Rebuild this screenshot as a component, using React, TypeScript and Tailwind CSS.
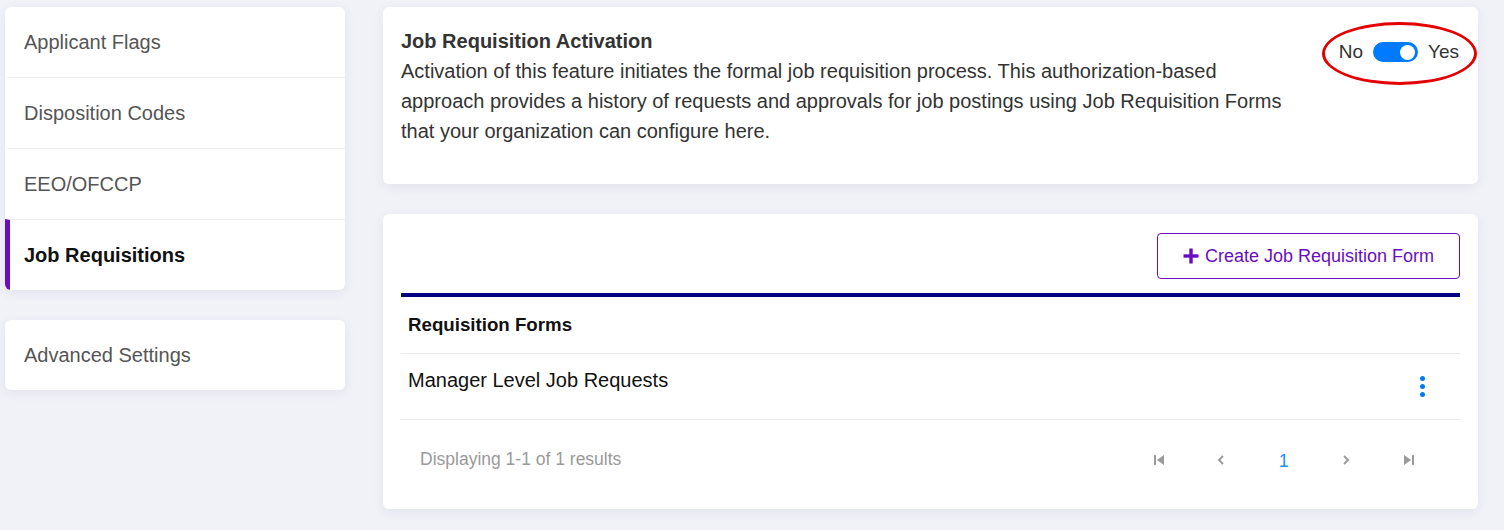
import { useState } from 'react';

const sideItems = ['Applicant Flags', 'Disposition Codes', 'EEO/OFCCP', 'Job Requisitions'];

export default function App() {
  const [active, setActive] = useState(true);
  const selected = 'Job Requisitions';

  return (
    <div className="flex min-h-[530px] gap-[38px] bg-[#f1f1f8] pl-[5px] pr-[26px] pt-[7px] font-['Liberation_Sans',Arial,sans-serif] text-[20px]">
      <aside className="flex w-[340px] shrink-0 flex-col gap-[30px]">
        <nav className="overflow-hidden rounded-md bg-white shadow-[0_3px_12px_rgba(40,40,90,0.07)]">
          {sideItems.map((item, i) => (
            <div
              key={item}
              className={`flex h-[70px] items-center pl-[14px] ${i > 0 ? 'box-content border-t border-[#ececf0]' : ''} ${item === selected ? 'border-l-[5px] border-l-[#6a0dc0] font-bold text-[#111]' : 'border-l-[5px] border-l-transparent text-[#555]'}`}
            >
              {item}
            </div>
          ))}
        </nav>
        <nav className="rounded-md bg-white shadow-[0_3px_12px_rgba(40,40,90,0.07)]">
          <div className="flex h-[70px] items-center pl-[19px] text-[#555]">Advanced Settings</div>
        </nav>
      </aside>

      <main className="flex flex-1 flex-col gap-[30px]">
        <section className="flex justify-between rounded-md bg-white px-[18px] pb-[38px] pt-[19px] leading-[30px] text-[#333] shadow-[0_3px_12px_rgba(40,40,90,0.07)]">
          <div className="w-[900px]">
            <h2 className="font-bold">Job Requisition Activation</h2>
            <p>
              Activation of this feature initiates the formal job requisition process. This authorization-based approach provides a history of requests and approvals for job postings using Job Requisition Forms that your organization can configure here.
            </p>
          </div>
          <div className="relative mr-[1px] mt-[11px] flex h-[30px] items-center gap-[10px] self-start text-[19px]">
            <span>No</span>
            <button
              onClick={() => setActive(!active)}
              className={`flex h-[20px] w-[45px] items-center rounded-full px-[3px] ${active ? 'justify-end bg-[#007bff]' : 'justify-start bg-[#ccc]'}`}
            >
              <span className="h-[15px] w-[15px] rounded-full bg-white" />
            </button>
            <span>Yes</span>
            <span className="pointer-events-none absolute -bottom-[18px] -left-[17px] -right-[18px] -top-[15px] rounded-[50%] border-[3px] border-[#e50000]" />
          </div>
        </section>

        <section className="rounded-md bg-white px-[18px] pt-[19px] shadow-[0_3px_12px_rgba(40,40,90,0.07)]">
          <div className="flex justify-end">
            <button className="flex h-[46px] w-[303px] items-center justify-center gap-[6px] rounded-[4px] border border-[#6a0dc0] text-[18px] text-[#6a0dc0]">
              <svg width="16" height="16" viewBox="0 0 16 16" fill="#6a0dc0">
                <rect x="6.3" y="0.5" width="3.4" height="15" />
                <rect x="0.5" y="6.3" width="15" height="3.4" />
              </svg>
              Create Job Requisition Form
            </button>
          </div>

          <div className="mt-[14px] h-[4px] bg-[#000080]" />
          <div className="flex h-[57px] items-center border-b border-[#eaeaea] pl-[7px] text-[18.7px] font-bold text-[#111]">Requisition Forms</div>
          <div className="flex h-[66px] justify-between border-b border-[#eaeaea] pl-[7px] pr-[35px] text-[#111]">
            <span className="pt-[11px] leading-[30px]">Manager Level Job Requests</span>
            <span className="flex flex-col gap-[3px] pt-[22px]">
              <span className="h-[5px] w-[5px] rounded-full bg-[#007bff]" />
              <span className="h-[5px] w-[5px] rounded-full bg-[#007bff]" />
              <span className="h-[5px] w-[5px] rounded-full bg-[#007bff]" />
            </span>
          </div>

          <div className="flex h-[89px] items-center justify-between pb-[10px] pl-[19px] pr-[20px]">
            <span className="text-[17.5px] text-[#9a9a9a]">Displaying 1-1 of 1 results</span>
            <div className="flex items-center">
              <PageCell>
                <svg width="12" height="12" viewBox="0 0 12 12" fill="#9a9a9a">
                  <rect x="1" y="1" width="2" height="10" />
                  <path d="M11 1 L4 6 L11 11 Z" />
                </svg>
              </PageCell>
              <PageCell>
                <svg width="8" height="12" viewBox="0 0 8 12" fill="none" stroke="#9a9a9a" strokeWidth="2">
                  <path d="M6 2 L2 6 L6 10" />
                </svg>
              </PageCell>
              <PageCell>
                <span className="pt-[3px] text-[18px] text-[#1e90ff]">1</span>
              </PageCell>
              <PageCell>
                <svg width="8" height="12" viewBox="0 0 8 12" fill="none" stroke="#9a9a9a" strokeWidth="2">
                  <path d="M2 2 L6 6 L2 10" />
                </svg>
              </PageCell>
              <PageCell>
                <svg width="12" height="12" viewBox="0 0 12 12" fill="#9a9a9a">
                  <path d="M1 1 L8 6 L1 11 Z" />
                  <rect x="9" y="1" width="2" height="10" />
                </svg>
              </PageCell>
            </div>
          </div>
        </section>
      </main>
    </div>
  );
}

function PageCell({ children }: { children: React.ReactNode }) {
  return <div className="flex w-[62.5px] items-center justify-center">{children}</div>;
}
